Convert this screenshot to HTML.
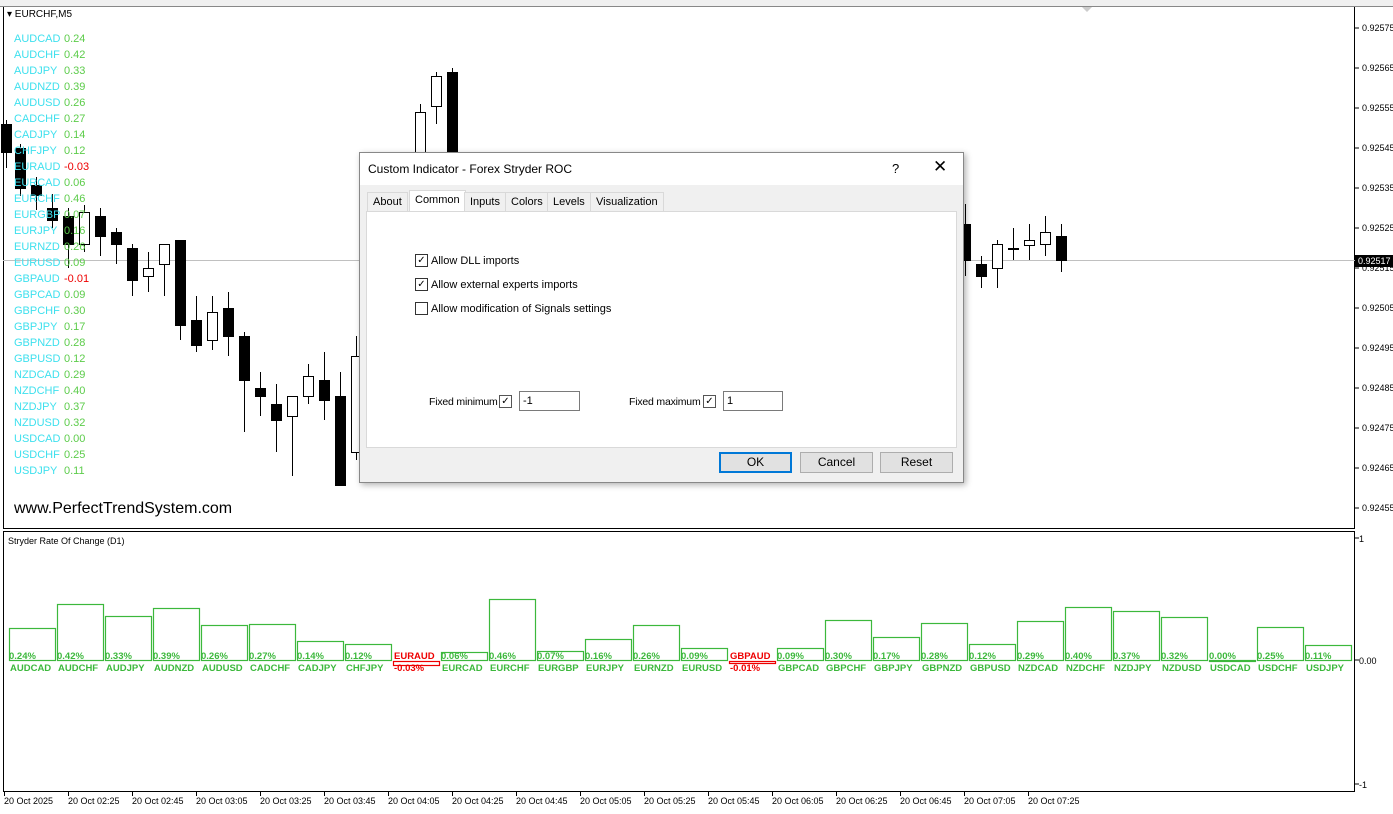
<!DOCTYPE html>
<html><head><meta charset="utf-8"><style>
*{margin:0;padding:0;box-sizing:border-box}
body{width:1393px;height:814px;background:#fff;position:relative;overflow:hidden;font-family:"Liberation Sans",sans-serif}
.a{position:absolute}
.lbl{font-size:11px;white-space:nowrap;line-height:12px}
.dlg{font-family:"Liberation Sans",sans-serif;font-size:11px;color:#000;white-space:nowrap}
.tab{position:absolute;top:192px;height:19px;border:1px solid #d9d9d9;border-bottom:none;background:#f0f0f0;font-size:11px;padding:3px 5px 0}
.cb{position:absolute;width:13px;height:13px;border:1px solid #333;background:#fff;font-size:10px;line-height:11px;text-align:center}
.btn{position:absolute;top:452px;height:21px;background:#e1e1e1;border:1px solid #adadad;font-size:12px;text-align:center;line-height:19px}
</style></head><body>
<div class="a" style="left:0;top:0;width:1393px;height:7px;background:#f0f0f0;border-bottom:1px solid #888"></div>
<div class="a" style="left:3px;top:7px;width:1352px;height:522px;border:1px solid #000;border-top:none"></div>
<div class="a" style="left:3px;top:531px;width:1352px;height:261px;border:1px solid #000"></div>
<div class="a" style="left:3px;top:260px;width:1352px;height:1px;background:#c0c0c0"></div>
<div class="a lbl" style="left:7px;top:9px;font-size:10px">&#9662; EURCHF,M5</div>
<div class="a" style="left:1082px;top:7px;width:0;height:0;border-left:5px solid transparent;border-right:5px solid transparent;border-top:5px solid #ccc"></div>
<svg id="cs" class="a" style="left:0;top:0" width="1393" height="814"></svg>
<div id="L"></div>
<div class="a" style="left:14px;top:500px;font-size:16px;color:#000">www.PerfectTrendSystem.com</div>
<div class="a lbl" style="left:8px;top:535px;font-size:9px">Stryder Rate Of Change (D1)</div>
<div class="a" style="left:1355px;top:255px;width:38px;height:12px;background:#000;color:#fff;font-size:9px;padding-left:3px;line-height:12px">0.92517</div>

<div class="a dlg" style="left:359px;top:152px;width:605px;height:331px;background:#f0f0f0;border:1px solid #888;box-shadow:2px 2px 6px rgba(0,0,0,.3)">
 <div class="a" style="left:0;top:0;width:603px;height:32px;background:#fff"></div>
 <div class="a" style="left:8px;top:9px;font-size:12px">Custom Indicator - Forex Stryder ROC</div>
 <div class="a" style="left:532px;top:8px;font-size:13px">?</div>
 <div class="a" style="left:573px;top:4px;font-size:17px">✕</div>
 <div class="a" style="left:6px;top:58px;width:591px;height:237px;background:#fff;border:1px solid #d9d9d9"></div>
</div>
<div class="tab dlg" style="left:367px">About</div>
<div class="tab dlg" style="left:409px;top:190px;height:21px;background:#fff">Common</div>
<div class="tab dlg" style="left:464px">Inputs</div>
<div class="tab dlg" style="left:505px">Colors</div>
<div class="tab dlg" style="left:547px">Levels</div>
<div class="tab dlg" style="left:590px">Visualization</div>
<div class="cb" style="left:415px;top:254px">✓</div><div class="a dlg" style="left:431px;top:255px">Allow DLL imports</div>
<div class="cb" style="left:415px;top:278px">✓</div><div class="a dlg" style="left:431px;top:279px">Allow external experts imports</div>
<div class="cb" style="left:415px;top:302px"></div><div class="a dlg" style="left:431px;top:303px">Allow modification of Signals settings</div>
<div class="a dlg" style="left:429px;top:396px;font-size:10.5px;letter-spacing:-0.2px">Fixed minimum</div>
<div class="cb" style="left:499px;top:395px;border-color:#555">✓</div>
<div class="a dlg" style="left:519px;top:391px;width:61px;height:20px;border:1px solid #7a7a7a;background:#fff;padding:3px 3px">-1</div>
<div class="a dlg" style="left:629px;top:396px;font-size:10.5px;letter-spacing:-0.2px">Fixed maximum</div>
<div class="cb" style="left:703px;top:395px;border-color:#555">✓</div>
<div class="a dlg" style="left:723px;top:391px;width:60px;height:20px;border:1px solid #7a7a7a;background:#fff;padding:3px 3px">1</div>
<div class="btn dlg" style="left:719px;width:73px;border:2px solid #0078d7;line-height:17px">OK</div>
<div class="btn dlg" style="left:800px;width:73px">Cancel</div>
<div class="btn dlg" style="left:880px;width:73px">Reset</div>

<script>
var s='';
var C=[[6,1,124,152,120,168],[20,1,148,188,144,196],[36,1,185,195,177,210],[52,1,208,220,194,228],[68,1,216,244,208,268],[84,0,212,244,205,252],[100,1,216,236,208,256],[116,1,232,244,228,264],[132,1,248,280,244,296],[148,0,268,276,252,292],[164,0,244,264,244,296],[180,1,240,325,240,340],[196,1,320,345,296,352],[212,0,312,340,296,350],[228,1,308,336,292,356],[244,1,336,380,332,432],[260,1,388,396,372,416],[276,1,404,420,384,452],[292,0,396,416,396,476],[308,0,376,396,364,404],[324,1,380,400,352,420],[340,1,396,485,372,485],[356,0,356,452,336,460],[420,0,112,160,104,160],[436,0,76,106,72,124],[452,1,72,160,68,160],[965,1,224,260,204,276],[981,1,264,276,256,288],[997,0,244,268,240,288],[1013,0,248,249,228,260],[1029,0,240,245,224,260],[1045,0,232,244,216,256],[1061,1,236,260,224,272]];
C.forEach(function(c){s+='<line x1="'+(c[0]+.5)+'" y1="'+c[4]+'" x2="'+(c[0]+.5)+'" y2="'+c[5]+'" stroke="#000"/>';s+='<rect x="'+(c[0]-4.5)+'" y="'+(c[2]+.5)+'" width="10" height="'+(c[3]-c[2])+'" fill="'+(c[1]?'#000':'#fff')+'" stroke="#000"/>';});
var P=['0.92575','0.92565','0.92555','0.92545','0.92535','0.92525','0.92515','0.92505','0.92495','0.92485','0.92475','0.92465','0.92455'];
P.forEach(function(p,i){var y=28+i*40;s+='<line x1="1355" y1="'+y+'" x2="1359" y2="'+y+'" stroke="#000"/><text x="1362" y="'+(y+3)+'" font-size="9" font-family="Liberation Sans">'+p+'</text>';});
[['1',538],['0.00',660],['-1',784]].forEach(function(a){s+='<line x1="1355" y1="'+a[1]+'" x2="1359" y2="'+a[1]+'" stroke="#000"/><text x="1359" y="'+(a[1]+4)+'" font-size="9" font-family="Liberation Sans">'+a[0]+'</text>';});
var T=['20 Oct 2025','20 Oct 02:25','20 Oct 02:45','20 Oct 03:05','20 Oct 03:25','20 Oct 03:45','20 Oct 04:05','20 Oct 04:25','20 Oct 04:45','20 Oct 05:05','20 Oct 05:25','20 Oct 05:45','20 Oct 06:05','20 Oct 06:25','20 Oct 06:45','20 Oct 07:05','20 Oct 07:25'];
T.forEach(function(t,i){var x=4+i*64;s+='<line x1="'+(x+.5)+'" y1="792" x2="'+(x+.5)+'" y2="796" stroke="#000"/><text x="'+x+'" y="804" font-size="9" font-family="Liberation Sans">'+t+'</text>';});
var N=['AUDCAD','AUDCHF','AUDJPY','AUDNZD','AUDUSD','CADCHF','CADJPY','CHFJPY','EURAUD','EURCAD','EURCHF','EURGBP','EURJPY','EURNZD','EURUSD','GBPAUD','GBPCAD','GBPCHF','GBPJPY','GBPNZD','GBPUSD','NZDCAD','NZDCHF','NZDJPY','NZDUSD','USDCAD','USDCHF','USDJPY'];
var V=[.24,.42,.33,.39,.26,.27,.14,.12,-.03,.06,.46,.07,.16,.26,.09,-.01,.09,.30,.17,.28,.12,.29,.40,.37,.32,0,.25,.11];
var F='font-family="Liberation Sans" font-size="9.5" font-weight="bold"';
N.forEach(function(n,i){var x=9+48*i,v=V[i],h=Math.round(Math.abs(v)*133);
 if(v>=0){s+='<rect x="'+(x+.5)+'" y="'+(660.5-h)+'" width="46" height="'+Math.max(h,1)+'" fill="none" stroke="#3cb83c" stroke-width="1.2"/>';
  s+='<text x="'+x+'" y="659" '+F+' fill="#3cb83c">'+v.toFixed(2)+'%</text><text x="'+(x+1)+'" y="671" '+F+' fill="#3cb83c">'+n+'</text>';}
 else{s+='<rect x="'+(x+.5)+'" y="661.5" width="46" height="'+Math.max(h,2)+'" fill="none" stroke="#e00" stroke-width="1.2"/>';
  s+='<text x="'+(x+1)+'" y="659" '+F+' fill="#e00">'+n+'</text><text x="'+(x+1)+'" y="671" '+F+' fill="#e00">'+v.toFixed(2)+'%</text>';}
});
document.getElementById('cs').innerHTML=s;
var L='';N.forEach(function(n,i){var y=33+i*16,v=V[i];L+='<div class="a lbl" style="left:14px;top:'+y+'px;color:#3ee0ee">'+n+'</div><div class="a lbl" style="left:64px;top:'+y+'px;color:'+(v<0?'#e00':'#5ccc4a')+'">'+v.toFixed(2)+'</div>';});
document.getElementById('L').innerHTML=L;
</script>
</body></html>
